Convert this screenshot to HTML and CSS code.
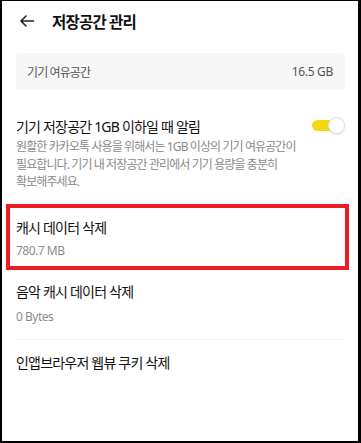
FILE: index.html
```html
<!DOCTYPE html>
<html lang="ko">
<head>
  <meta charset="UTF-8" />
  <meta name="viewport" content="width=device-width, initial-scale=1.0"/>
  <title>저장공간 관리</title>
  <link rel="stylesheet" href="styles.css">
</head>
<body>

<div class="screen">
  <!-- Top bar -->
  <div class="topbar">
    <svg class="back" width="14" height="12" viewBox="0 0 14 12">
      <path d="M13.5 6H1.2M6 1L1 6l5 5" fill="none" stroke="#222" stroke-width="1.6" stroke-linecap="round" stroke-linejoin="round"/>
    </svg>
    <h1>저장공간 관리</h1>
  </div>

  <div class="content">
    <div class="free">
      <span>기기 여유공간</span>
      <span class="free-size">16.5 GB</span>
    </div>

    <div class="setting">
      <div class="setting-head">
        <span class="title">기기 저장공간 1GB 이하일 때 알림</span>
        <div class="toggle"><span class="track"></span><span class="knob"></span></div>
      </div>
      <p class="desc">원활한 카카오톡 사용을 위해서는 1GB 이상의 기기 여유공간이<br>필요합니다. 기기 내 저장공간 관리에서 기기 용량을 충분히<br>확보해주세요.</p>
    </div>

    <div class="row highlight">
      <div class="title">캐시 데이터 삭제</div>
      <div class="sub">780.7 MB</div>
    </div>

    <div class="row music">
      <div class="title">음악 캐시 데이터 삭제</div>
      <div class="sub">0 Bytes</div>
    </div>

    <div class="row cookie">
      <div class="title">인앱브라우저 웹뷰 쿠키 삭제</div>
    </div>
  </div>
</div>

</body>
</html>
```

FILE: styles.css
```css
* { box-sizing: border-box; margin: 0; padding: 0; }
body { font-family: "Noto Sans", "Noto Sans CJK KR", sans-serif; background: #fff; color: #1a1a1a; }
.screen { height: 443px; border-style: solid; border-color: #000; border-width: 1px 3px 2px 2px; background: #fff; overflow: hidden; }

.topbar { height: 40px; display: flex; align-items: center; padding-left: 18px; }
.topbar .back { display: block; }
.topbar h1 { margin-left: 18px; font-size: 15.5px; font-weight: 700; letter-spacing: -0.8px; color: #111; }

.content { padding: 0 13px 0 14px; }

.free { margin-top: 12px; height: 37px; display: flex; justify-content: space-between; align-items: center; padding: 0 12px 0 11px; background: #f7f7f7; border-radius: 2px; font-size: 12px; letter-spacing: -0.9px; color: #555; }
.free .free-size { letter-spacing: -0.3px; }

.title { font-size: 14px; line-height: 20px; letter-spacing: -0.8px; color: #111; white-space: nowrap; }
.sub { font-size: 12px; line-height: 18px; letter-spacing: -0.5px; color: #8c8c8c; }

.setting { margin-top: 27px; }
.setting-head { display: flex; justify-content: space-between; align-items: center; height: 20px; }
.toggle { position: relative; width: 33px; height: 17px; margin-top: -3px; }
.toggle .track { position: absolute; left: 0; top: 3px; width: 30px; height: 11px; border-radius: 6px; background: #f6d812; }
.toggle .knob { position: absolute; right: 0; top: 0; width: 17px; height: 17px; border-radius: 50%; background: #fff; border: 1px solid #dcdcdc; box-shadow: 0 1px 2px rgba(0, 0, 0, 0.12); }
.desc { margin-top: 1px; font-size: 12px; line-height: 17.5px; letter-spacing: -0.9px; color: #8a8a8a; white-space: nowrap; }

.row.highlight { margin: 13.5px -4px 0 -10px; border: 4px solid #ec1c24; padding: 10px 0 6px 6px; }
.row.highlight .sub { margin-top: 4px; }
.row.music { padding: 11.5px 0 13.5px; border-bottom: 1px solid #f3f3f3; }
.row.music .sub { margin-top: 6px; }
.row.cookie { padding-top: 12.5px; }
```
